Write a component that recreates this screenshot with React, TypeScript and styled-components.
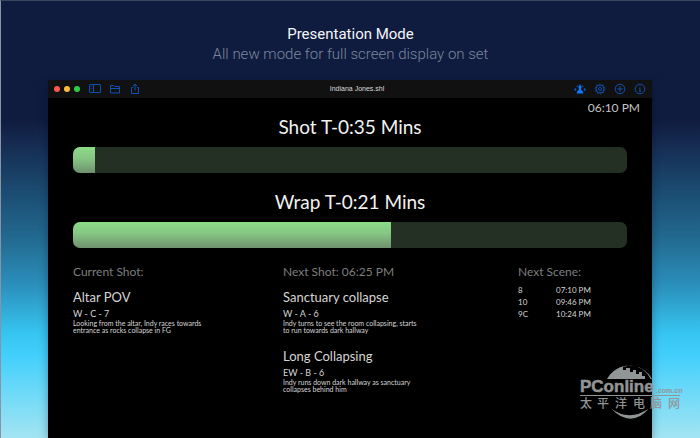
import React from "react";
import styled, { createGlobalStyle } from "styled-components";

const GlobalStyle = createGlobalStyle`
  *, *::before, *::after { box-sizing: border-box; }
  body {
    margin: 0;
    font-family: Lato, "Open Sans", sans-serif;
    color: #d6d6d6;
    background: #0f1c3f;
  }
  h1, h2, h3, p { margin: 0; font-weight: 400; }
`;

const Page = styled.main`
  position: relative;
  display: flex;
  flex-direction: column;
  min-height: 100vh;
  padding: 23px 48px 0;
  border-left: 1px solid #8b93a3;
  border-top: 1px solid #3c4660;
  background: linear-gradient(
    #0f1c3f 0%,
    #0f1c3f 27%,
    #15294f 32%,
    #1b4a70 43%,
    #22698f 54%,
    #2b8fbb 65%,
    #36c5f0 76%,
    #42cffb 81%,
    #6fdaf8 90%,
    #a3e4f2 100%
  );
  overflow: hidden;
`;

const Intro = styled.header`
  text-align: center;
  font-family: Roboto, sans-serif;
  line-height: 20px;
`;

const IntroTitle = styled.h1`
  font-size: 15px;
  color: #f4f5f8;
`;

const IntroText = styled.p`
  font-size: 15px;
  font-weight: 300;
  color: #7d869e;
`;

const AppWindow = styled.section`
  flex: 1;
  display: flex;
  flex-direction: column;
  margin: 16px 0 0 -1px;
  background: #000;
  border-radius: 2px 2px 0 0;
  box-shadow: 0 2px 10px rgba(0, 8, 40, 0.35);
`;

const TitleBar = styled.div`
  display: grid;
  grid-template-columns: 1fr auto 1fr;
  align-items: center;
  height: 18px;
  padding: 0 6px;
  background: #111;
  border-radius: 2px 2px 0 0;
`;

const BarGroup = styled.div<{ $end?: boolean }>`
  display: flex;
  align-items: center;
  gap: 8px;
  justify-content: ${(p) => (p.$end ? "flex-end" : "flex-start")};
`;

const Lights = styled.div`
  display: flex;
  gap: 4px;
  margin-right: 1px;
`;

const Light = styled.button<{ $color: string }>`
  width: 6px;
  height: 6px;
  padding: 0;
  border: 0;
  border-radius: 50%;
  background: ${(p) => p.$color};
`;

const IconButton = styled.button`
  display: flex;
  width: 12px;
  height: 12px;
  padding: 0;
  border: 0;
  background: none;
  color: #0c51b4;
`;

const FileName = styled.span`
  padding-left: 14px;
  font-family: "Liberation Sans", Arial, sans-serif;
  font-size: 7px;
  line-height: 10px;
  color: #dcdcdc;
`;

const Clock = styled.time`
  align-self: flex-end;
  padding: 2px 12px 0;
  font-size: 12px;
  line-height: 16px;
  color: #c4c4c4;
`;

const Body = styled.div`
  display: flex;
  flex-direction: column;
  margin-top: -1px;
  padding: 0 25px;
`;

const Countdown = styled.div`
  margin-bottom: 17px;
`;

const CountdownTitle = styled.h2`
  margin-bottom: 8px;
  text-align: center;
  font-size: 19px;
  line-height: 24px;
  color: #f2f2f2;
`;

const Track = styled.div`
  height: 26px;
  border-radius: 7px;
  background: #243024;
  overflow: hidden;
`;

const Fill = styled.div`
  height: 100%;
  background: linear-gradient(#8bdc87, #85c583 45%, #6f916d);
`;

const Columns = styled.div`
  display: grid;
  grid-template-columns: 210fr 235fr 109fr;
  margin-top: -2px;
`;

const ColumnTitle = styled.h2`
  font-size: 12px;
  line-height: 18px;
  color: #7e7e7e;
`;

const Shot = styled.article`
  margin: 7px 0 13px;
`;

const ShotName = styled.h3`
  margin-bottom: 2px;
  font-size: 13px;
  line-height: 18px;
`;

const ShotCode = styled.p`
  font-size: 9px;
  line-height: 12px;
`;

const ShotNote = styled.p`
  font-size: 7px;
  line-height: 7px;
`;

const SceneTable = styled.table`
  margin-top: 3px;
  border-collapse: collapse;
  font-size: 8px;
  line-height: 12px;

  td { padding: 0; }
  td:first-child { width: 38px; }
`;

const Watermark = styled.div`
  position: absolute;
  right: 14px;
  bottom: 16px;
  width: 106px;
  height: 60px;

  svg { display: block; }
`;

const Icon = ({ children }: { children: React.ReactNode }) => (
  <svg width="12" height="12" viewBox="0 0 12 12" fill="none" stroke="currentColor" strokeWidth="1" aria-hidden="true">
    {children}
  </svg>
);

const countdowns = [
  { title: "Shot T-0:35 Mins", done: 4 },
  { title: "Wrap T-0:21 Mins", done: 57.4 },
];

const current = [
  { name: "Altar POV", code: "W - C - 7", note: ["Looking from the altar, Indy races towards", "entrance as rocks collapse in FG"] },
];

const next = [
  { name: "Sanctuary collapse", code: "W - A - 6", note: ["Indy turns to see the room collapsing, starts", "to run towards dark hallway"] },
  { name: "Long Collapsing", code: "EW - B - 6", note: ["Indy runs down dark hallway as sanctuary", "collapses behind him"] },
];

const scenes = [
  ["8", "07:10 PM"],
  ["10", "09:46 PM"],
  ["9C", "10:24 PM"],
];

const ShotList = ({ shots }: { shots: typeof current }) => (
  <>
    {shots.map((s) => (
      <Shot key={s.name}>
        <ShotName>{s.name}</ShotName>
        <ShotCode>{s.code}</ShotCode>
        <ShotNote>
          {s.note[0]}
          <br />
          {s.note[1]}
        </ShotNote>
      </Shot>
    ))}
  </>
);

export default function App() {
  return (
    <>
      <GlobalStyle />
      <Page>
        <Intro>
          <IntroTitle>Presentation Mode</IntroTitle>
          <IntroText>All new mode for full screen display on set</IntroText>
        </Intro>
        <AppWindow>
          <TitleBar>
            <BarGroup>
              <Lights>
                <Light $color="#fc5650" aria-label="Close" />
                <Light $color="#fdbd35" aria-label="Minimise" />
                <Light $color="#2bce48" aria-label="Full screen" />
              </Lights>
              <IconButton aria-label="Sidebar">
                <Icon>
                  <rect x="0.5" y="1.5" width="11" height="8" rx="0.5" />
                  <path d="M4.5 1.5v8" />
                  <path d="M1.5 3.5h2M1.5 5.5h2" opacity="0.5" />
                </Icon>
              </IconButton>
              <IconButton aria-label="Open">
                <Icon>
                  <path d="M1.500 10V2.500h3l1 1h5V10zM1.500 5.500h9" />
                </Icon>
              </IconButton>
              <IconButton aria-label="Share">
                <Icon>
                  <path d="M4 4.500H2.500v6h7v-6H8M6 7.500V1.200M4 3l2-2 2 2" />
                </Icon>
              </IconButton>
            </BarGroup>
            <FileName>Indiana Jones.shl</FileName>
            <BarGroup $end>
              <IconButton aria-label="Presentation">
                <Icon>
                  <path d="M2.500 3.800A4.500 4.500 0 0 1 9.500 3.800" stroke="#0b5fd6" strokeDasharray="2 1" />
                  <path d="M0 6.500h2.500M9.500 6.500H12M1.500 5v3M10.500 5v3" stroke="#0b4fae" />
                  <path d="M6 2.500a1.600 1.600 0 0 1 1.200 2.700L7 7q2.200.4 2.400 3.500H2.600Q2.800 7.400 5 7L4.800 5.200A1.600 1.600 0 0 1 6 2.500z" fill="#0a78ff" stroke="none" />
                </Icon>
              </IconButton>
              <IconButton aria-label="Settings">
                <Icon>
                  <circle cx="6" cy="6" r="4" />
                  <circle cx="6" cy="6" r="1.500" />
                  <circle cx="6" cy="6" r="4.900" strokeDasharray="1.500 1.580" />
                </Icon>
              </IconButton>
              <IconButton aria-label="Add">
                <Icon>
                  <circle cx="6" cy="6" r="4.800" />
                  <path d="M6 3.200v5.600M3.200 6h5.600" />
                </Icon>
              </IconButton>
              <IconButton aria-label="Information">
                <Icon>
                  <circle cx="6" cy="6" r="4.800" />
                  <path d="M6 3.200v1.100M5.200 5.300H6v3M5 8.300h2" />
                </Icon>
              </IconButton>
            </BarGroup>
          </TitleBar>
          <Clock>06:10 PM</Clock>
          <Body>
            {countdowns.map((c) => (
              <Countdown key={c.title}>
                <CountdownTitle>{c.title}</CountdownTitle>
                <Track role="progressbar" aria-label={c.title} aria-valuenow={c.done}>
                  <Fill style={{ width: `${c.done}%` }} />
                </Track>
              </Countdown>
            ))}
            <Columns>
              <div>
                <ColumnTitle>Current Shot:</ColumnTitle>
                <ShotList shots={current} />
              </div>
              <div>
                <ColumnTitle>Next Shot: 06:25 PM</ColumnTitle>
                <ShotList shots={next} />
              </div>
              <div>
                <ColumnTitle>Next Scene:</ColumnTitle>
                <SceneTable>
                  <tbody>
                    {scenes.map(([scene, time]) => (
                      <tr key={scene}>
                        <td>{scene}</td>
                        <td>{time}</td>
                      </tr>
                    ))}
                  </tbody>
                </SceneTable>
              </div>
            </Columns>
          </Body>
        </AppWindow>
        <Watermark>
          <svg width="106" height="60" viewBox="0 0 106 60" fill="#929596" role="img" aria-label="PConline">
            <path d="M27 17A25.500 25.500 0 0 1 72 17L70.500 17A24 24 0 0 0 50 3.200L43 5V8H46V6H50V10H53V8H56V12H59V10H62V14H65V17Z" />
            <path d="M31 46.500Q49 60 69 46.500Q51 67 31 46.500Z" />
            <text x="0" y="30" fontFamily="Liberation Sans, Arial, sans-serif" fontWeight="700" fontSize="17" stroke="#929596" strokeWidth="0.500">PConline</text>
            <text x="76" y="31" fontFamily="Liberation Sans, Arial, sans-serif" fontWeight="700" fontSize="7">.com.cn</text>
            <rect x="0" y="33" width="100" height="1" />
            <text x="0 17 35 53 70 88" y="46" fontFamily="Noto Sans CJK SC, sans-serif" fontWeight="500" fontSize="12">太平洋电脑网</text>
          </svg>
        </Watermark>
      </Page>
    </>
  );
}
